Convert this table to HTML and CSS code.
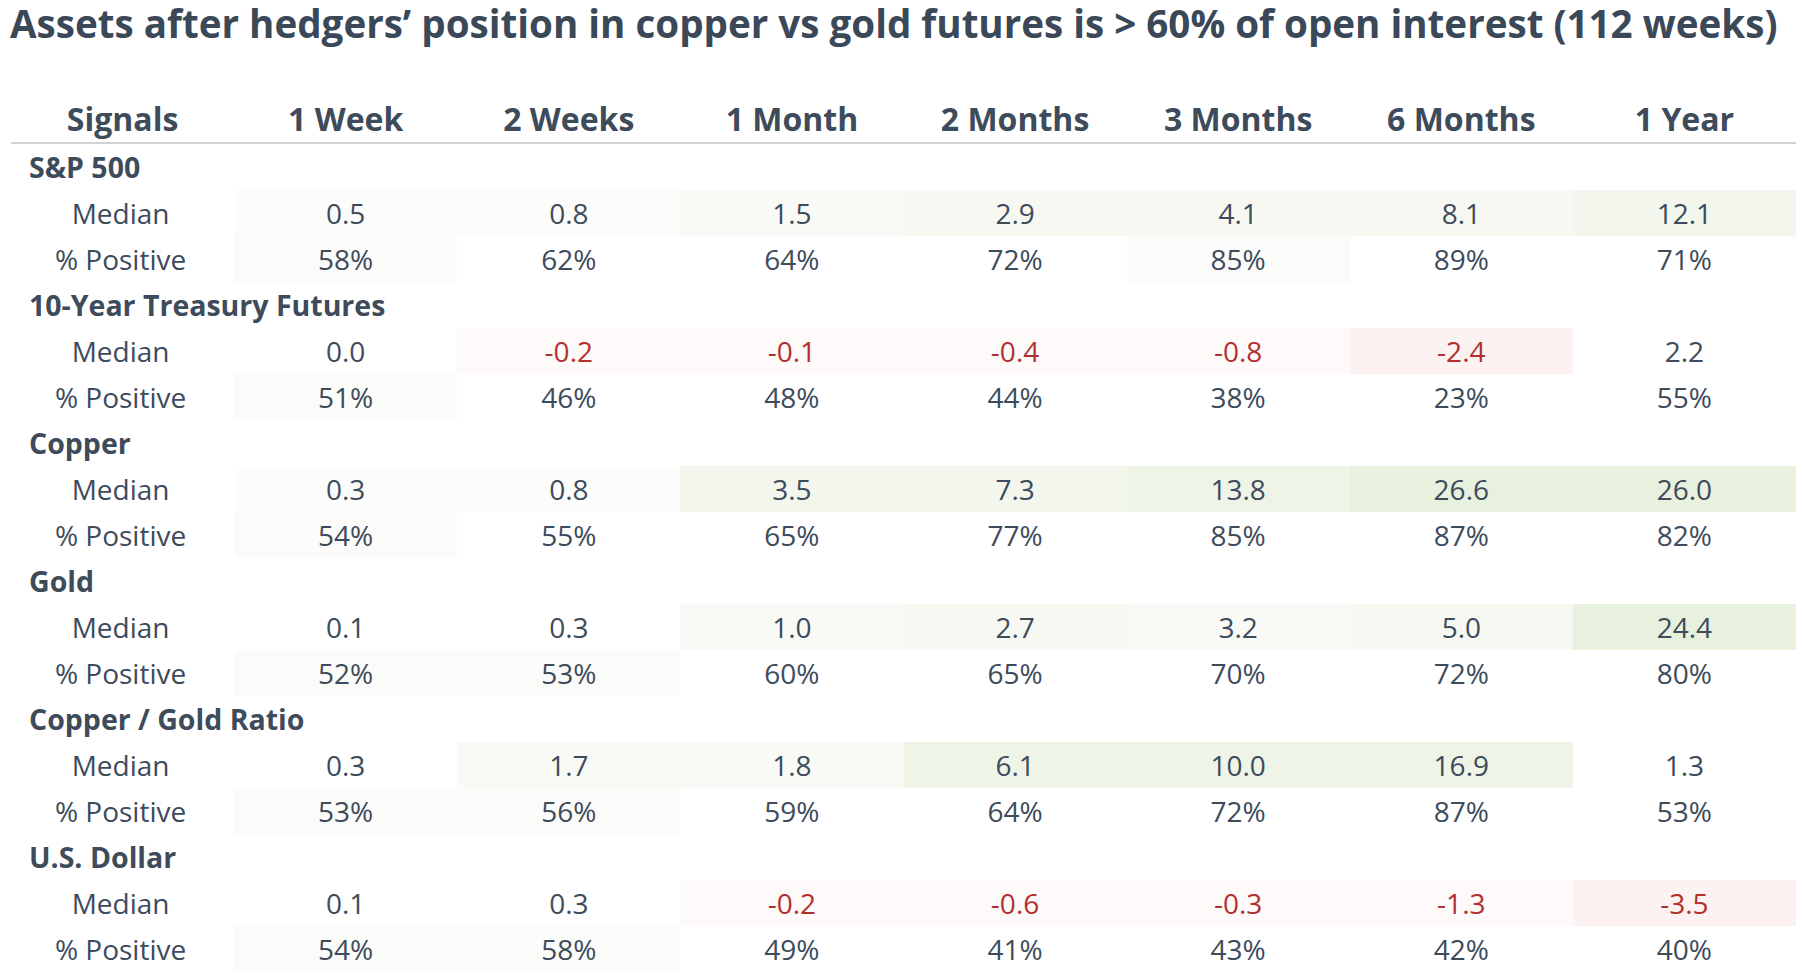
FILE: index.html
```html
<!DOCTYPE html>
<html lang="en">
<head>
<meta charset="utf-8">
<title>Copper vs gold hedgers</title>
<link rel="stylesheet" href="styles.css">
</head>
<body>
<div class="page">
  <h1 class="title">Assets after hedgers’ position in copper vs gold futures is &gt; 60% of open interest (112 weeks)</h1>
  <table class="signals">
    <thead>
      <tr class="head">
        <th>Signals</th><th>1 Week</th><th>2 Weeks</th><th>1 Month</th><th>2 Months</th><th>3 Months</th><th>6 Months</th><th>1 Year</th>
      </tr>
    </thead>
    <tbody>
      <tr class="group"><td colspan="8">S&amp;P 500</td></tr>
      <tr><td class="lbl">Median</td><td class="g0">0.5</td><td class="g0">0.8</td><td class="g1">1.5</td><td class="g2">2.9</td><td class="g2">4.1</td><td class="g2">8.1</td><td class="g3">12.1</td></tr>
      <tr><td class="lbl">% Positive</td><td class="p0">58%</td><td>62%</td><td>64%</td><td>72%</td><td class="p0">85%</td><td>89%</td><td>71%</td></tr>

      <tr class="group"><td colspan="8">10-Year Treasury Futures</td></tr>
      <tr><td class="lbl">Median</td><td>0.0</td><td class="neg r0">-0.2</td><td class="neg r0">-0.1</td><td class="neg r0">-0.4</td><td class="neg r0">-0.8</td><td class="neg r1">-2.4</td><td>2.2</td></tr>
      <tr><td class="lbl">% Positive</td><td class="p0">51%</td><td>46%</td><td>48%</td><td>44%</td><td>38%</td><td>23%</td><td>55%</td></tr>

      <tr class="group"><td colspan="8">Copper</td></tr>
      <tr><td class="lbl">Median</td><td class="g0">0.3</td><td class="g0">0.8</td><td class="g3">3.5</td><td class="g3">7.3</td><td class="g4">13.8</td><td class="g5">26.6</td><td class="g5">26.0</td></tr>
      <tr><td class="lbl">% Positive</td><td class="p0">54%</td><td>55%</td><td>65%</td><td>77%</td><td>85%</td><td>87%</td><td>82%</td></tr>

      <tr class="group"><td colspan="8">Gold</td></tr>
      <tr><td class="lbl">Median</td><td>0.1</td><td>0.3</td><td class="g1">1.0</td><td class="g2">2.7</td><td class="g1">3.2</td><td class="g2">5.0</td><td class="g5">24.4</td></tr>
      <tr><td class="lbl">% Positive</td><td class="p0">52%</td><td class="p0">53%</td><td>60%</td><td>65%</td><td>70%</td><td>72%</td><td>80%</td></tr>

      <tr class="group"><td colspan="8">Copper / Gold Ratio</td></tr>
      <tr><td class="lbl">Median</td><td>0.3</td><td class="g1">1.7</td><td class="g1">1.8</td><td class="g4">6.1</td><td class="g4">10.0</td><td class="g4">16.9</td><td>1.3</td></tr>
      <tr><td class="lbl">% Positive</td><td class="p0">53%</td><td class="p0">56%</td><td>59%</td><td>64%</td><td>72%</td><td>87%</td><td>53%</td></tr>

      <tr class="group"><td colspan="8">U.S. Dollar</td></tr>
      <tr><td class="lbl">Median</td><td>0.1</td><td>0.3</td><td class="neg r0">-0.2</td><td class="neg r0">-0.6</td><td class="neg r0">-0.3</td><td class="neg r0">-1.3</td><td class="neg r1">-3.5</td></tr>
      <tr><td class="lbl">% Positive</td><td class="p0">54%</td><td class="p0">58%</td><td>49%</td><td>41%</td><td>43%</td><td>42%</td><td>40%</td></tr>
    </tbody>
  </table>
</div>
</body>
</html>
```
FILE: styles.css
```css
html, body {
  margin: 0;
  padding: 0;
  background: #ffffff;
}

.page {
  padding: 0 0 0 10px;
  font-family: "Open Sans", "Noto Sans", "DejaVu Sans", sans-serif;
  color: #3d4b5b;
}

.title {
  margin: 0;
  font-size: 38.6px;
  font-weight: 700;
  line-height: 46px;
  color: #3a4858;
  white-space: nowrap;
}

.signals {
  margin: 51px 0 0 1px;
  width: 1785px;
  border-collapse: collapse;
  table-layout: fixed;
}

.signals th,
.signals td {
  padding: 0;
  text-align: center;
  vertical-align: middle;
}

.head th {
  height: 43px;
  padding-bottom: 2px;
  font-size: 32px;
  font-weight: 700;
  border-bottom: 2px solid #cfd1d3;
}

.signals td {
  height: 46px;
  font-size: 28px;
  font-weight: 400;
}

.signals td.lbl {
  padding-right: 4px;
}

.group td {
  text-align: left;
  padding-left: 18px;
  font-size: 28.5px;
  font-weight: 700;
}

.neg { color: #b2302f; }

.g0 { background: #fcfcfa; }
.g1 { background: #f9faf5; }
.g2 { background: #f6f8f1; }
.g3 { background: #f2f6ec; }
.g4 { background: #eef4e6; }
.g5 { background: #e8f0de; }
.r0 { background: #fefafa; }
.r1 { background: #fbf2f1; }
.p0 { background: #fbfbf9; }
```
